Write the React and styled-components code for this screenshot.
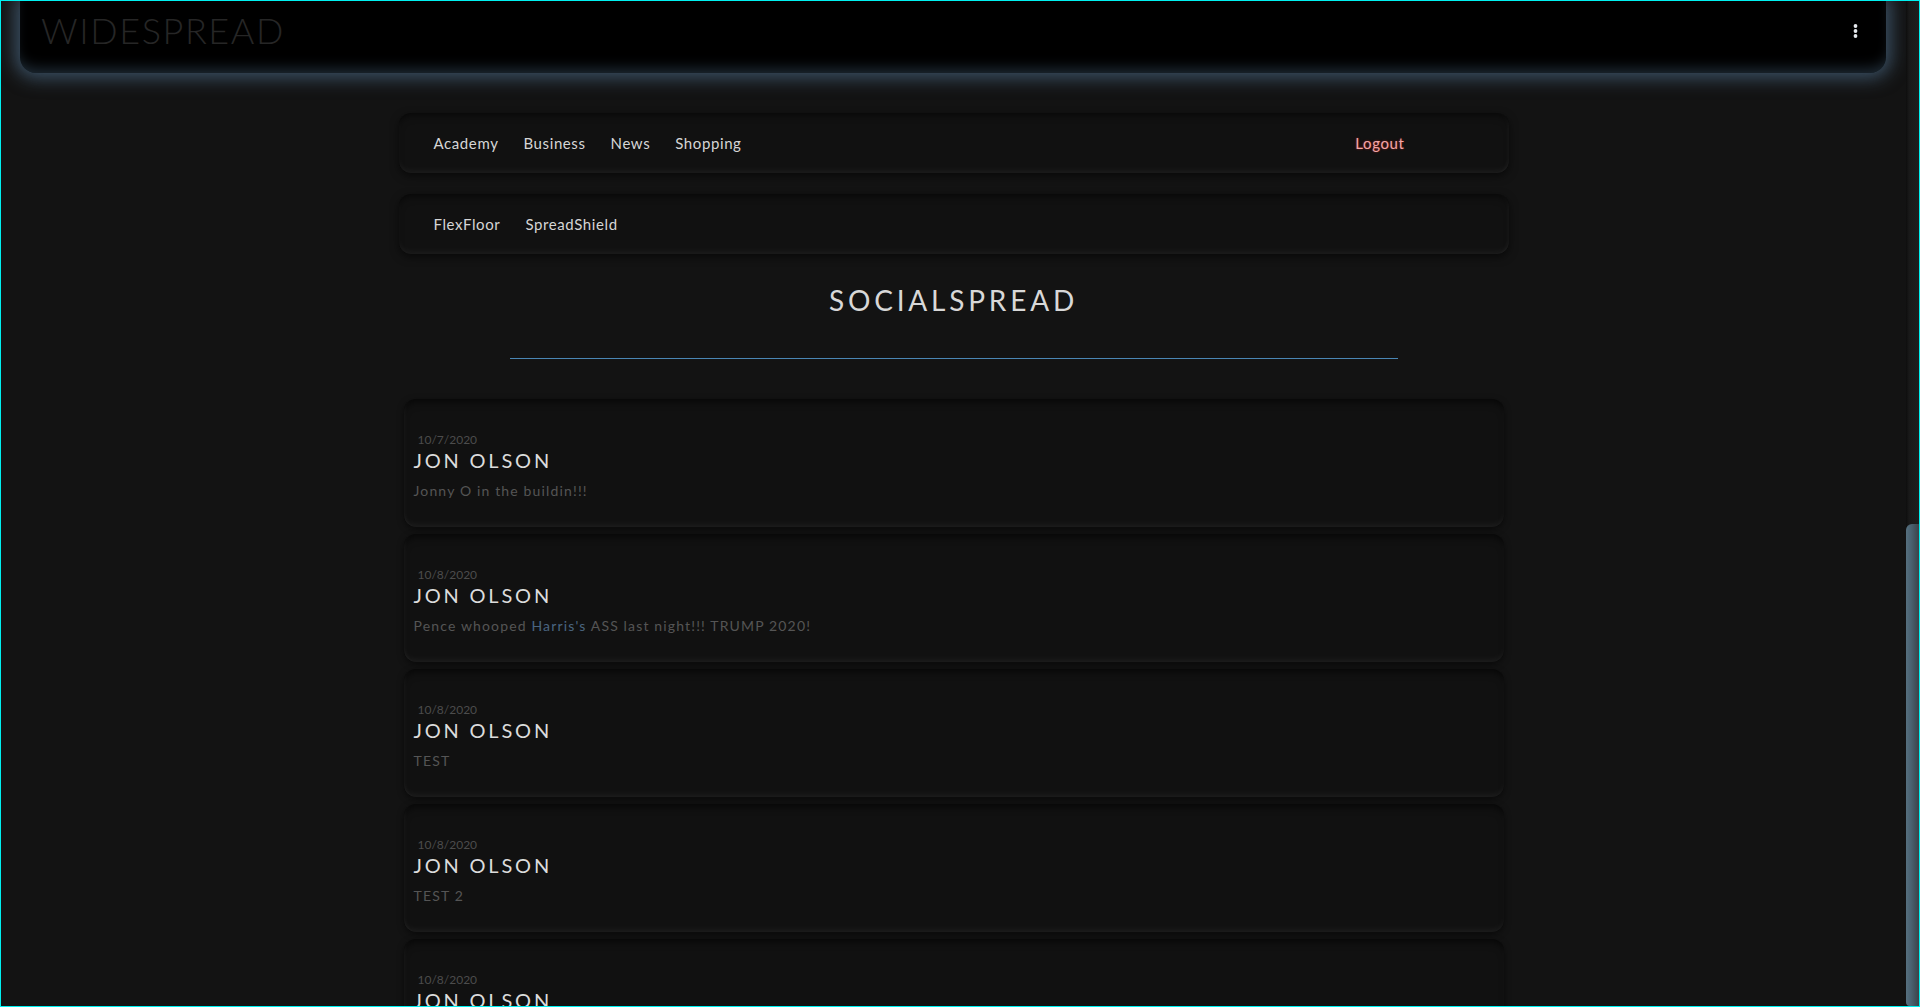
import React from 'react';
import styled, { createGlobalStyle } from 'styled-components';

const GlobalStyle = createGlobalStyle`
  html, body {
    margin: 0;
    padding: 0;
    background: #131313;
    overflow: hidden;
  }
  * { box-sizing: border-box; }
`;

const posts = [
    { date: '10/7/2020', name: 'Jon Olson', body: ['Jonny O in the buildin!!!'] },
    { date: '10/8/2020', name: 'Jon Olson', body: ['Pence whooped ', { tag: "Harris's" }, ' ASS last night!!! TRUMP 2020!'] },
    { date: '10/8/2020', name: 'Jon Olson', body: ['TEST'] },
    { date: '10/8/2020', name: 'Jon Olson', body: ['TEST 2'] },
    { date: '10/8/2020', name: 'Jon Olson', body: ['TEST 3'] },
];

function Kebab() {
    return (
        <svg width="5" height="14" viewBox="0 0 5 14">
            <circle cx="2.5" cy="2" r="1.9" fill="#e4e8ec" />
            <circle cx="2.5" cy="7" r="1.9" fill="#e4e8ec" />
            <circle cx="2.5" cy="12" r="1.9" fill="#e4e8ec" />
        </svg>
    );
}

export default function App() {
    return (
        <>
            <GlobalStyle />
            <Frame>
                <Main>
                    <Header>
                        <Brand>WIDESPREAD</Brand>
                        <MenuButton><Kebab /></MenuButton>
                    </Header>

                    <Content>
                        <NavBar>
                            <NavLink>Academy</NavLink>
                            <NavLink>Business</NavLink>
                            <NavLink>News</NavLink>
                            <NavLink>Shopping</NavLink>
                            <NavLink $danger>Logout</NavLink>
                        </NavBar>
                        <NavBar>
                            <NavLink>FlexFloor</NavLink>
                            <NavLink>SpreadShield</NavLink>
                        </NavBar>

                        <Title>SOCIALSPREAD</Title>
                        <Divider />

                        <Feed>
                            {posts.map((p, i) => (
                                <Post key={i}>
                                    <PostDate>{p.date}</PostDate>
                                    <PostName>{p.name}</PostName>
                                    <PostBody>
                                        {p.body.map((b, j) =>
                                            typeof b === 'string' ? b : <Mention key={j}>{b.tag}</Mention>
                                        )}
                                    </PostBody>
                                </Post>
                            ))}
                        </Feed>
                    </Content>
                </Main>
                <ScrollTrack>
                    <ScrollThumb />
                </ScrollTrack>
            </Frame>
        </>
    );
}

const Frame = styled.div`
  height: 100vh;
  border: 1px solid #00f0f0;
  display: flex;
  overflow: hidden;
  font-family: Lato, "Open Sans", sans-serif;
`;

const Main = styled.div`
  flex: 1;
  min-width: 0;
  overflow: hidden;
  display: flex;
  flex-direction: column;
`;

const Header = styled.header`
  flex: 0 0 72px;
  margin: 0 20px 0 19px;
  padding: 0 28px 0 21px;
  background: #000;
  border-radius: 0 0 16px 16px;
  display: flex;
  align-items: center;
  justify-content: space-between;
  box-shadow: 0 0 18px 5px rgba(72, 102, 128, 0.75),
    inset 0 -10px 14px -6px rgba(70, 100, 125, 0.45);
`;

const Brand = styled.h1`
  margin: 0 0 14px;
  font-size: 36px;
  line-height: 1;
  font-weight: 300;
  letter-spacing: 1.6px;
  color: #262626;
`;

const MenuButton = styled.div`
  display: flex;
  margin-bottom: 12px;
`;

const Content = styled.div`
  width: 1110px;
  margin: 40px auto 0;
  display: flex;
  flex-direction: column;
`;

const NavBar = styled.nav`
  height: 60px;
  margin-bottom: 21px;
  padding: 0 104px 0 35px;
  display: flex;
  align-items: center;
  gap: 25px;
  background: #111;
  border-radius: 12px;
  box-shadow: inset 0 5px 8px -4px rgba(0, 0, 0, 0.7),
    inset 0 -4px 6px -2px rgba(255, 255, 255, 0.06),
    inset -3px 0 5px -2px rgba(255, 255, 255, 0.04),
    0 3px 8px rgba(0, 0, 0, 0.55);
`;

const NavLink = styled.a`
  font-size: 15px;
  letter-spacing: 0.6px;
  color: ${p => (p.$danger ? '#f0a6a6' : '#d6d6d6')};
  text-shadow: ${p => (p.$danger ? '0 0 2px rgba(220, 40, 40, 0.7)' : 'none')};
  margin-left: ${p => (p.$danger ? 'auto' : '0')};
  cursor: pointer;
`;

const Title = styled.h2`
  margin: 9px 0 0;
  text-align: center;
  font-size: 28px;
  line-height: 1.2;
  font-weight: 400;
  letter-spacing: 3.8px;
  color: #d8d8d8;
`;

const Divider = styled.hr`
  width: 80%;
  margin: 40px auto 0;
  border: 0;
  border-top: 1px solid #4a86b4;
`;

const Feed = styled.div`
  margin: 40px 5px 0;
  display: flex;
  flex-direction: column;
  gap: 7px;
`;

const Post = styled.article`
  height: 128px;
  flex-shrink: 0;
  padding: 34px 10px 0;
  background: #111;
  border-radius: 12px;
  box-shadow: inset 0 6px 8px -4px rgba(0, 0, 0, 0.7),
    inset 0 -4px 6px -2px rgba(255, 255, 255, 0.06),
    inset 3px 0 5px -3px rgba(255, 255, 255, 0.05),
    0 2px 6px rgba(0, 0, 0, 0.5);
`;

const PostDate = styled.div`
  padding-left: 4px;
  font-size: 12px;
  line-height: 1.2;
  color: #4c4c4c;
`;

const PostName = styled.div`
  margin-top: 1px;
  font-size: 20px;
  line-height: 1.2;
  letter-spacing: 2.8px;
  text-transform: uppercase;
  color: #dcdcdc;
`;

const PostBody = styled.p`
  margin: 11px 0 0;
  font-size: 14px;
  line-height: 1.2;
  letter-spacing: 1.15px;
  color: #555;
`;

const Mention = styled.span`
  color: #4a6580;
`;

const ScrollTrack = styled.div`
  flex: 0 0 13px;
  display: flex;
  flex-direction: column;
  background: linear-gradient(90deg, #0e0e0e 0, #191919 3px, #1e1e1e 100%);
`;

const ScrollThumb = styled.div`
  margin-top: auto;
  height: 482px;
  border-radius: 6px 0 0 4px;
  background: linear-gradient(90deg, #56707f 0, #4a6170 40%, #3b4248 100%);
`;
